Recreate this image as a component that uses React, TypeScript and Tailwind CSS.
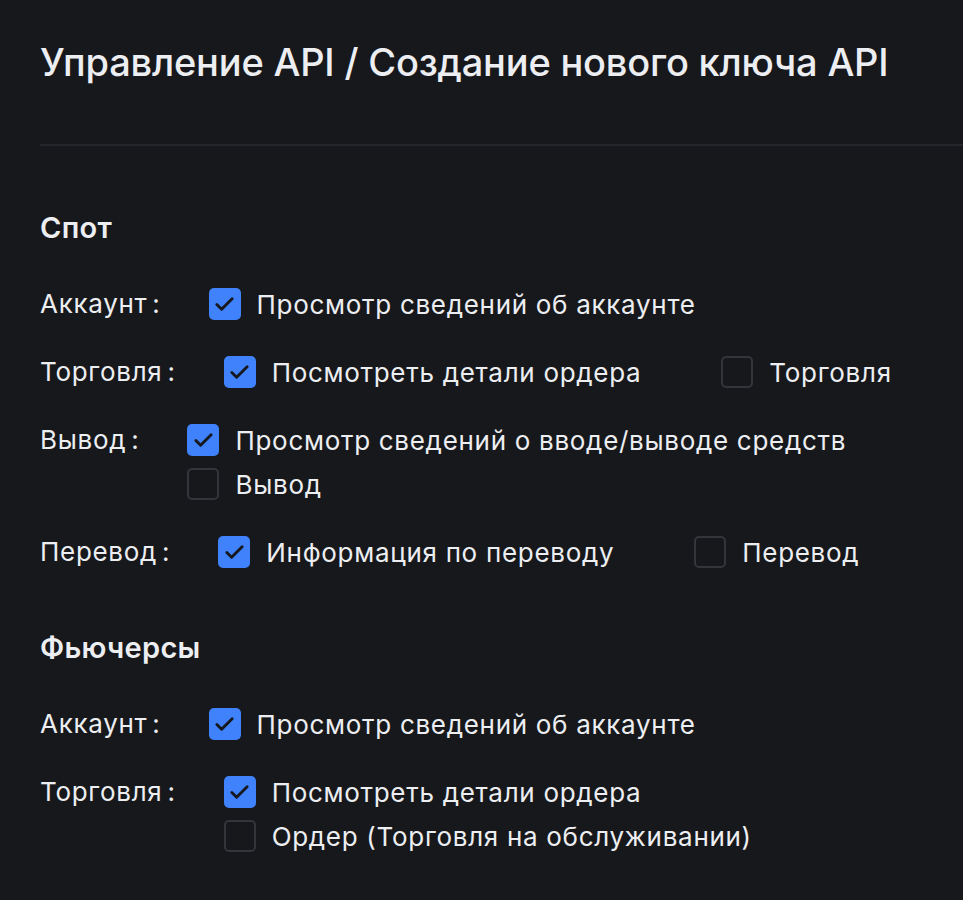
import { Check } from 'lucide-react'

type Opt = { label: string; checked: boolean }
type Row = { label: string; options: Opt[] }

const spot: Row[] = [
  { label: 'Аккаунт', options: [{ label: 'Просмотр сведений об аккаунте', checked: true }] },
  {
    label: 'Торговля',
    options: [
      { label: 'Посмотреть детали ордера', checked: true },
      { label: 'Торговля', checked: false },
    ],
  },
  {
    label: 'Вывод',
    options: [
      { label: 'Просмотр сведений о вводе/выводе средств', checked: true },
      { label: 'Вывод', checked: false },
    ],
  },
  {
    label: 'Перевод',
    options: [
      { label: 'Информация по переводу', checked: true },
      { label: 'Перевод', checked: false },
    ],
  },
]

const futures: Row[] = [
  { label: 'Аккаунт', options: [{ label: 'Просмотр сведений об аккаунте', checked: true }] },
  {
    label: 'Торговля',
    options: [
      { label: 'Посмотреть детали ордера', checked: true },
      { label: 'Ордер (Торговля на обслуживании)', checked: false },
    ],
  },
]

function Box({ checked }: { checked: boolean }) {
  if (checked)
    return (
      <span className="flex h-8 w-8 shrink-0 items-center justify-center rounded-[5px] bg-[#3f82fc]">
        <Check size={23} strokeWidth={3} className="text-[#17181c]" />
      </span>
    )
  return <span className="h-8 w-8 shrink-0 rounded-[5px] border-2 border-[#33353b]" />
}

function PermRow({ row }: { row: Row }) {
  return (
    <div className="flex items-start">
      <div className="h-11 shrink-0 leading-[44px]">
        {row.label}
        <span className="ml-[5px]">:</span>
      </div>
      <div className="ml-[48px] flex flex-wrap gap-x-20">
        {row.options.map((o) => (
          <label key={o.label} className="flex h-11 items-center gap-4">
            <Box checked={o.checked} />
            <span>{o.label}</span>
          </label>
        ))}
      </div>
    </div>
  )
}

function Section({ title, rows }: { title: string; rows: Row[] }) {
  return (
    <section>
      <h2 className="text-[29px] font-semibold leading-[40px] tracking-[0.3px]">{title}</h2>
      <div className="mt-[34px] flex flex-col gap-[24px]">
        {rows.map((r) => (
          <PermRow key={r.label} row={r} />
        ))}
      </div>
    </section>
  )
}

export default function App() {
  return (
    <div className="min-h-[900px] overflow-hidden bg-[#17181c] pl-10 font-['Inter',sans-serif] text-[26px] tracking-[0.7px] text-[#eceef1]">
      <h1 className="pt-[40px] text-[38px] font-medium leading-[44px] tracking-[-0.2px]">
        Управление API / Создание нового ключа API
      </h1>
      <div className="mt-[60px] h-[2px] bg-[#24262b]" />
      <div className="mt-[62px] flex flex-col gap-[54px]">
        <Section title="Спот" rows={spot} />
        <Section title="Фьючерсы" rows={futures} />
      </div>
    </div>
  )
}
